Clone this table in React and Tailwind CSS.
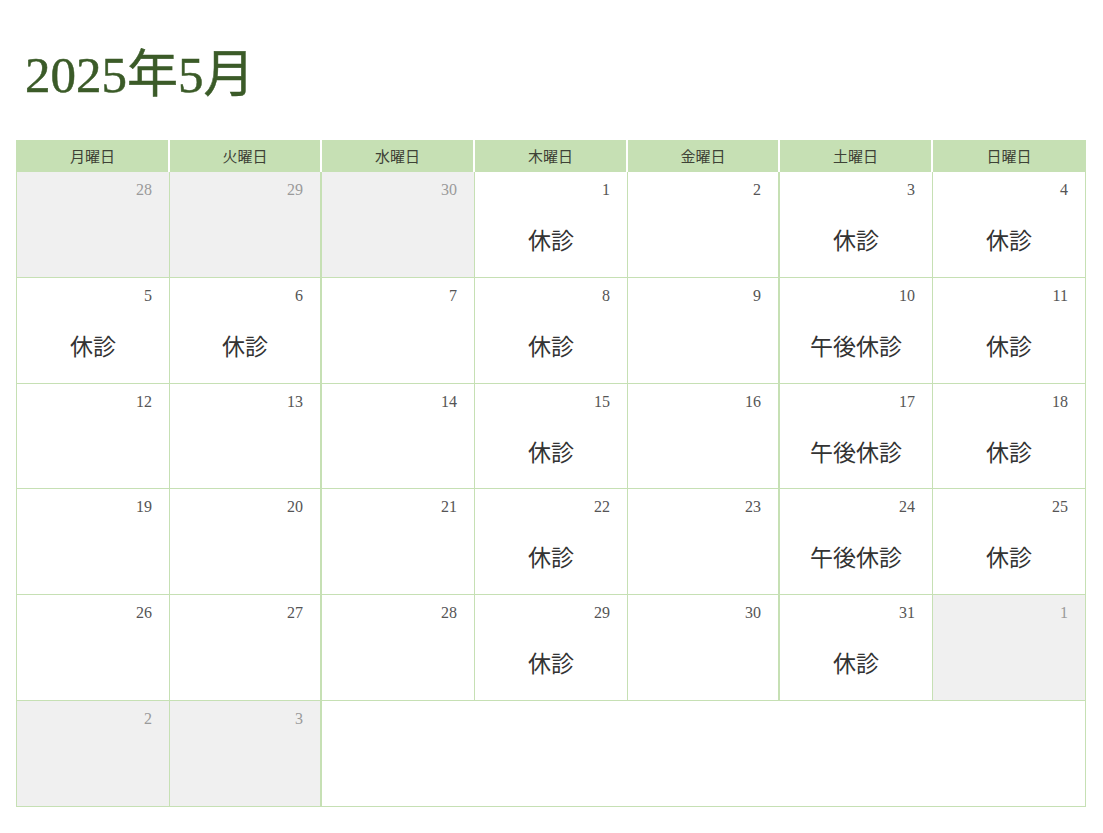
import React from "react";

const days = ["月曜日", "火曜日", "水曜日", "木曜日", "金曜日", "土曜日", "日曜日"];

const cells = [
  { d: 28, o: true }, { d: 29, o: true }, { d: 30, o: true }, { d: 1, t: "休診" }, { d: 2 }, { d: 3, t: "休診" }, { d: 4, t: "休診" },
  { d: 5, t: "休診" }, { d: 6, t: "休診" }, { d: 7 }, { d: 8, t: "休診" }, { d: 9 }, { d: 10, t: "午後休診" }, { d: 11, t: "休診" },
  { d: 12 }, { d: 13 }, { d: 14 }, { d: 15, t: "休診" }, { d: 16 }, { d: 17, t: "午後休診" }, { d: 18, t: "休診" },
  { d: 19 }, { d: 20 }, { d: 21 }, { d: 22, t: "休診" }, { d: 23 }, { d: 24, t: "午後休診" }, { d: 25, t: "休診" },
  { d: 26 }, { d: 27 }, { d: 28 }, { d: 29, t: "休診" }, { d: 30 }, { d: 31, t: "休診" }, { d: 1, o: true },
  { d: 2, o: true }, { d: 3, o: true },
];

const serif = { fontFamily: '"Liberation Serif", "Noto Sans CJK JP", serif' };
const cjk = { fontFamily: '"Noto Sans CJK JP", sans-serif' };

export default function App() {
  return (
    <div className="w-[1103px] h-[833px] bg-white relative">
      <div className="pt-[45px] pl-[25px] h-[140px]">
        <h1
          className="text-[51px] leading-[60px] font-normal text-[#3b5b28] [-webkit-text-stroke:0.5px_#3b5b28]"
          style={serif}
        >
          2025年5月
        </h1>
      </div>
      <div className="ml-[16px] w-[1070px] grid grid-cols-[153px_152px_153px_153px_152px_153px_153px] grid-rows-[32px_106px_106px_105px_106px_106px_106px] border-l border-[#c6e0b4]">
        {days.map((d, i) => (
          <div
            key={d}
            className={`bg-[#c6e0b4] flex items-center justify-center text-[15px] text-[#3e4236] ${i < 6 ? "border-r-2 border-white" : "border-r border-[#c6e0b4]"}`}
            style={cjk}
          >
            {d}
          </div>
        ))}
        {cells.map((c, i) => {
          const col = i % 7;
          const thick = col === 1 || col === 4;
          return (
            <div
              key={i}
              className={`${c.o ? "bg-[#f0f0f0]" : "bg-white"} border-[#c6e0b4] border-b ${thick ? "border-r-2" : "border-r"} flex flex-col`}
            >
              <div
                className={`text-right pr-[17px] pt-[8px] text-[16px] leading-[20px] ${c.o ? "text-[#9a9a9a]" : "text-[#555]"}`}
                style={serif}
              >
                {c.d}
              </div>
              {c.t && (
                <div className="mt-[24px] text-center text-[23px] leading-[30px] text-[#333]" style={cjk}>
                  {c.t}
                </div>
              )}
            </div>
          );
        })}
        <div className="col-span-5 bg-white border-b border-r border-[#c6e0b4]" />
      </div>
    </div>
  );
}
